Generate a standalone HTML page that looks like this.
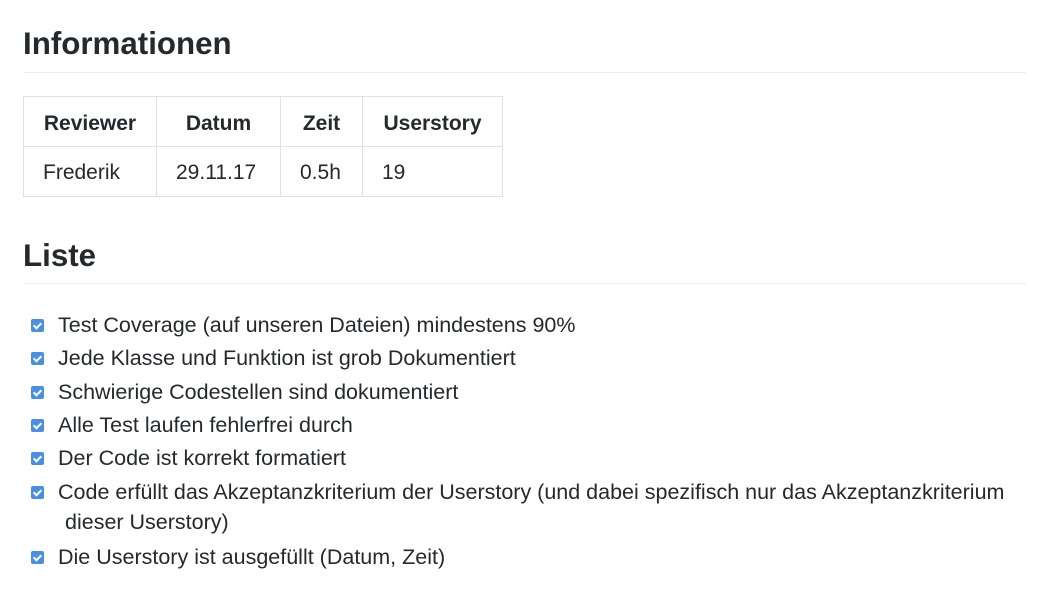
<!DOCTYPE html>
<html><head><meta charset="utf-8"><style>
body{margin:0;background:#fff;color:#24292e;font-family:"Liberation Sans",Arial,sans-serif;font-size:21.5px;}
.wrap{position:relative;width:1048px;height:598px;}
h2{position:absolute;left:23px;margin:0;font-size:31.3px;font-weight:bold;line-height:1;}
.hr{position:absolute;left:23px;width:1003px;height:1px;background:#eaecef;}
table{position:absolute;left:23px;top:96px;border-collapse:collapse;table-layout:fixed;width:479px;}
td,th{border:1px solid #dfe2e5;height:50px;padding:3px 0 0 19px;text-align:left;font-size:21px;line-height:24px;box-sizing:border-box;}
th{text-align:center;font-weight:bold;padding:4px 0 0;}
.li{position:absolute;left:58px;line-height:30px;white-space:nowrap;}
.cb{position:absolute;left:-27px;top:9px;width:13px;height:13px;background:#4a90e2;border-radius:2px;}
.cb:after{content:"";position:absolute;left:4px;top:1.5px;width:3px;height:6px;border:solid #fff;border-width:0 2px 2px 0;transform:rotate(45deg);}
</style></head><body><div class="wrap">
<h2 style="top:28px">Informationen</h2>
<div class="hr" style="top:72px"></div>
<table>
<colgroup><col style="width:133px"><col style="width:124px"><col style="width:82px"><col style="width:140px"></colgroup>
<tr><th>Reviewer</th><th>Datum</th><th>Zeit</th><th>Userstory</th></tr>
<tr><td>Frederik</td><td>29.11.17</td><td>0.5h</td><td>19</td></tr>
</table>
<h2 style="top:240px">Liste</h2>
<div class="hr" style="top:283px"></div>
<div class="li" style="top:310px"><span class="cb"></span>Test Coverage (auf unseren Dateien) mindestens 90%</div>
<div class="li" style="top:343px"><span class="cb"></span>Jede Klasse und Funktion ist grob Dokumentiert</div>
<div class="li" style="top:377px"><span class="cb"></span>Schwierige Codestellen sind dokumentiert</div>
<div class="li" style="top:410px"><span class="cb"></span>Alle Test laufen fehlerfrei durch</div>
<div class="li" style="top:443px"><span class="cb"></span>Der Code ist korrekt formatiert</div>
<div class="li" style="top:477px"><span class="cb"></span>Code erfüllt das Akzeptanzkriterium der Userstory (und dabei spezifisch nur das Akzeptanzkriterium<br><span style="margin-left:7px">dieser Userstory)</span></div>
<div class="li" style="top:542px"><span class="cb"></span>Die Userstory ist ausgefüllt (Datum, Zeit)</div>
</div></body></html>
